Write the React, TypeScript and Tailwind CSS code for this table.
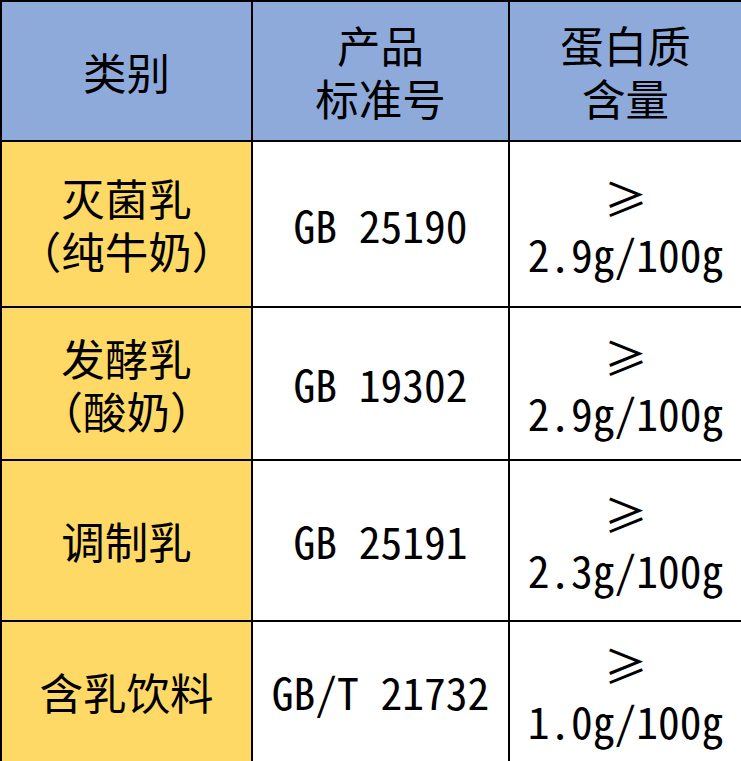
import React from "react";

const rows = [
  { cat: ["灭菌乳", "（纯牛奶）"], std: "GB 25190", val: "2.9g/100g", h: "h-[166px]" },
  { cat: ["发酵乳", "（酸奶）"], std: "GB 19302", val: "2.9g/100g", h: "h-[153px]" },
  { cat: ["调制乳"], std: "GB 25191", val: "2.3g/100g", h: "h-[161px]" },
  { cat: ["含乳饮料"], std: "GB/T 21732", val: "1.0g/100g", h: "h-[141px]" },
];

export default function App() {
  return (
    <div className="w-[741px] h-[761px] bg-white text-black font-['Noto_Sans_CJK_SC',sans-serif] text-[43.5px] leading-[53px] [text-spacing-trim:space-all]">
      <table className="w-[741px] border-collapse table-fixed">
        <colgroup>
          <col className="w-[251px]" />
          <col className="w-[257px]" />
          <col className="w-[233px]" />
        </colgroup>
        <tbody>
          <tr className="h-[140px] bg-[#8eaadb]">
            <td className="border-2 border-black text-center align-middle p-0">类别</td>
            <td className="border-2 border-black text-center align-middle p-0">
              <div>产品</div>
              <div>标准号</div>
            </td>
            <td className="border-2 border-black text-center align-middle p-0">
              <div>蛋白质</div>
              <div>含量</div>
            </td>
          </tr>
          {rows.map((r, i) => (
            <tr key={i} className={r.h}>
              <td className="border-2 border-black bg-[#ffd966] text-center align-middle p-0">
                {r.cat.map((c, j) => (
                  <div key={j} className="[text-spacing-trim:space-all] whitespace-nowrap">
                    {c}
                  </div>
                ))}
              </td>
              <td className="border-2 border-black bg-white text-center align-middle p-0 [font-feature-settings:'hwid']">
                {r.std}
              </td>
              <td className="border-2 border-black bg-white text-center align-middle p-0 [font-feature-settings:'hwid']">
                <div className="leading-[58px]">≥</div>
                <div>{r.val}</div>
              </td>
            </tr>
          ))}
        </tbody>
      </table>
    </div>
  );
}
